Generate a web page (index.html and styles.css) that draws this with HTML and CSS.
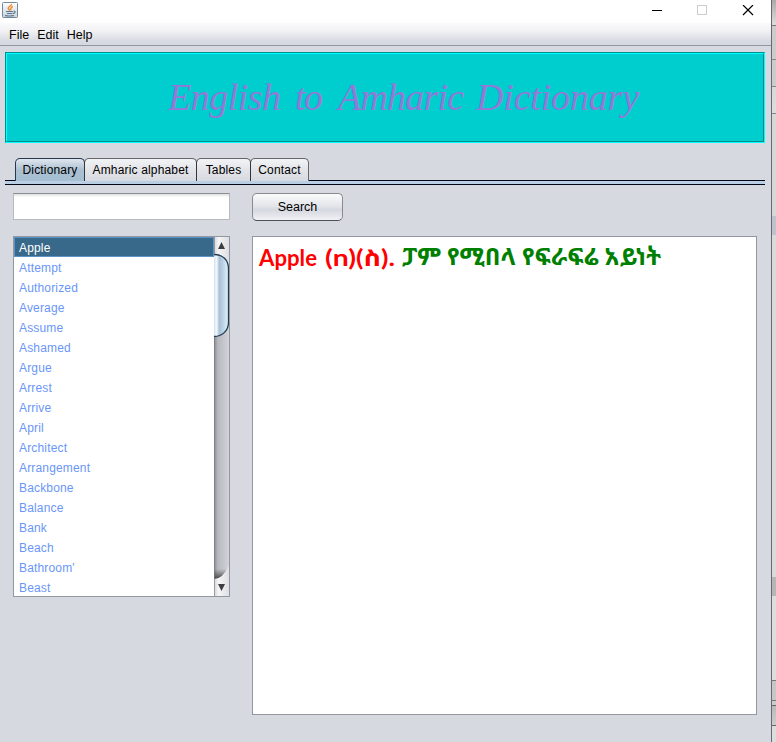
FILE: index.html
```html
<!DOCTYPE html>
<html lang="en">
<head>
<meta charset="utf-8">
<title>English to Amharic Dictionary</title>
<link rel="stylesheet" href="styles.css">
</head>
<body>
<div class="screen">
  <main class="window">
    <header class="titlebar">
      <svg class="java" width="16" height="16" viewBox="0 0 16 16">
        <defs><linearGradient id="ib" x2="0" y2="1"><stop stop-color="#fff"/><stop offset="1" stop-color="#c9d3da"/></linearGradient></defs>
        <rect x=".5" y=".5" width="15" height="15" rx="1" fill="url(#ib)" stroke="#71899c"/>
        <path d="M9.500 2C10 4 5.500 4.500 6.200 6.500Q7 7.500 8 8.500M10.800 4.500C8 5.500 9.500 6.500 8.500 8" fill="none" stroke="#ee8427" stroke-width="1.400"/>
        <path d="M4 9.500H11M5 11.500H10.500M3 13.500Q7 14.500 12 13.500M11.500 9Q14 9 12.500 11L11 11.500" fill="none" stroke="#59768e" stroke-width="1.200"/>
      </svg>
      <svg class="controls" width="102" height="12" viewBox="0 0 102 12" shape-rendering="crispEdges">
        <path d="M0 5.500H10" stroke="#000"/>
        <rect x="45.500" y=".5" width="9" height="9" fill="none" stroke="#ccc"/>
        <path d="M91 0L101 10M101 0L91 10" stroke="#000" stroke-width="1.200" shape-rendering="auto"/>
      </svg>
    </header>
    <nav class="menubar"><span>File</span><span>Edit</span><span>Help</span></nav>
    <section class="banner"><div class="banner-in">
      <svg width="500" height="86" viewBox="0 0 500 86">
        <g class="title">
          <text x="9" y="56" textLength="113">English</text>
          <text x="136" y="56" textLength="28">to</text>
          <text x="179" y="56" textLength="126">Amharic</text>
          <text x="317" y="56" textLength="163">Dictionary</text>
        </g>
      </svg>
    </div></section>
    <nav class="tabs">
      <span class="tab t1 active">Dictionary</span><span class="tab t2">Amharic alphabet</span><span class="tab t3">Tables</span><span class="tab t4">Contact</span>
    </nav>
    <div class="rail"></div>
    <section class="content">
      <div class="side">
        <input class="query" type="text" aria-label="Word">
        <div class="list">
          <ul>
            <li class="selected">Apple</li><li>Attempt</li><li>Authorized</li><li>Average</li><li>Assume</li><li>Ashamed</li><li>Argue</li><li>Arrest</li><li>Arrive</li><li>April</li><li>Architect</li><li>Arrangement</li><li>Backbone</li><li>Balance</li><li>Bank</li><li>Beach</li><li>Bathroom'</li><li class="last">Beast</li>
          </ul>
          <svg class="scroll" width="15" height="359" viewBox="0 0 15 359">
            <defs>
              <linearGradient id="track"><stop stop-color="#85878d"/><stop offset=".25" stop-color="#b6b8be"/><stop offset="1" stop-color="#d2d4d9"/></linearGradient>
              <linearGradient id="thumb"><stop stop-color="#cfdfed"/><stop offset=".16" stop-color="#f5faff"/><stop offset=".38" stop-color="#a9c1d7"/><stop offset=".65" stop-color="#bfd6e7"/><stop offset="1" stop-color="#dff5fd"/></linearGradient>
              <linearGradient id="end"><stop stop-color="#d3d4d7"/><stop offset=".3" stop-color="#f5f5f6"/><stop offset="1" stop-color="#dedfe3"/></linearGradient>
              <linearGradient id="shade" x2="0" y2="1"><stop stop-color="#555" stop-opacity="0"/><stop offset="1" stop-color="#444"/></linearGradient>
            </defs>
            <rect width="15" height="359" fill="url(#track)"/>
            <path d="M0 0H15V34Q14 17 0 17Z" fill="url(#end)"/>
            <rect y="332" width="15" height="10" fill="url(#shade)"/>
            <path d="M0 342Q9 342 15 328V359H0Z" fill="url(#end)"/>
            <path d="M0 17.500C8 17.500 14.500 22 14.500 32V85C14.500 94 8 99.500 0 99.500Z" fill="url(#thumb)"/>
            <path d="M0 17.500C8 17.500 14.500 22 14.500 32V85C14.500 94 8 99.500 0 99.500" fill="none" stroke="#243d53" stroke-width="1.300"/>
            <path d="M7.500 5L11 12H4ZM4 347H11L7.500 354Z" fill="#3d3e42"/>
            <path d="M.5 0V17M.5 100V359" stroke="#77797f" stroke-opacity=".65"/>
          </svg>
        </div>
      </div>
      <div class="detail">
        <button class="search">Search</button>
        <article class="result">
          <svg width="420" height="40" viewBox="0 0 420 40">
            <g class="word">
              <text x="6" y="29" textLength="58" lengthAdjust="spacingAndGlyphs">Apple</text>
              <text x="72" y="29" textLength="31" lengthAdjust="spacingAndGlyphs">(n)</text>
              <text x="103" y="29" textLength="39" lengthAdjust="spacingAndGlyphs">(ስ).</text>
            </g>
            <text class="meaning" x="149" y="28" textLength="259" lengthAdjust="spacingAndGlyphs">ፓም የሚበላ የፍራፍሬ አይነት</text>
          </svg>
        </article>
      </div>
    </section>
  </main>
  <aside class="behind"></aside>
</div>
</body>
</html>
```
FILE: styles.css
```css
* { box-sizing: border-box; }
body { margin: 0; overflow: hidden; font: 12px/15px "Liberation Sans", Arial, sans-serif; color: #000; }
.screen { display: flex; width: 776px; height: 742px; }
.window { width: 772px; background: #d6d9e0; border-right: 1px solid #666970; }
.titlebar { height: 23px; background: #fff; display: flex; justify-content: space-between; padding: 2px 17px 0 2px; }
.controls { margin-top: 3px; }
.menubar { height: 23px; border-bottom: 1px solid #9297a1; background: linear-gradient(#fafafb, #f2f2f5 35%, #d6d9e0 85%); display: flex; gap: 8px; padding: 5px 9px 0; font-size: 12.500px; }
.banner { width: 760px; height: 91px; margin: 6px 0 0 5px; border: 1px solid; border-color: #008f8f #0ff #0ff #008f8f; }
.banner-in { height: 89px; border: 1px solid; border-color: #0ff #008f8f #008f8f #0ff; background: #00cdcd; padding: 0 0 0 152px; }
.banner svg { display: block; }
.title { font: italic 38px "Liberation Serif", serif; fill: #9478d8; }
.tabs { display: flex; height: 22px; margin: 15px 0 0 15px; letter-spacing: .16px; }
.tab { height: 23px; border: 1px solid #64666c; border-bottom: 0; border-left-color: #33363e; border-radius: 5px 5px 0 0; background: linear-gradient(#f2f3f5, #e2e4e8 50%, #d7dae1); text-align: center; padding-top: 4px; margin-right: -1px; white-space: nowrap; }
.t1 { width: 70px; }
.t2 { width: 113px; }
.t3 { width: 55px; }
.t4 { width: 59px; }
.active { background: linear-gradient(#e0e7ef, #abc0d2 50%, #a6bfd3); border-color: #26374a; }
.rail { width: 760px; height: 5px; margin-left: 5px; border: solid #000818; border-width: 1px 0; background: #bacfe3; }
.content { display: flex; gap: 22px; padding: 8px 0 0 13px; }
.side { width: 217px; }
.query { display: block; width: 217px; height: 27px; border: 1px solid #b8babf; border-top-color: #8d8f94; border-radius: 0; background: linear-gradient(#ddd, #fff 3px); outline: none; }
.list { height: 361px; margin-top: 16px; border: 1px solid #9297a1; background: #fff; display: flex; overflow: hidden; }
ul { list-style: none; width: 200px; margin: 0; padding: 0; }
li { height: 20px; padding: 4px 5px 0; color: #6a96f7; letter-spacing: .16px; }
.last { height: 19px; }
.selected { background: #39698a; color: #fff; border: 1px solid #5c93c4; padding: 3px 4px 0; line-height: 15px; }
.scroll { display: block; }
.search { display: block; width: 91px; height: 28px; padding: 0 0 1px; font: 12.500px "Liberation Sans", Arial, sans-serif; color: #000; border: 1px solid #898b91; border-bottom-color: #4f5157; border-radius: 5px; background: linear-gradient(#fafbfc, #e2e4e9 48%, #d5d8df 60%, #eff1f5); }
.result { width: 505px; height: 479px; margin-top: 15px; border: 1px solid #9297a1; background: #fff; }
.result svg { display: block; }
.word, .meaning { font: bold 24px Lato, "Noto Sans Ethiopic", "Noto Serif Ethiopic", sans-serif; fill: #f00; }
.word { font-size: 22px; }
.meaning { fill: #008000; }
.behind { width: 4px; background: linear-gradient(#aaa, #ddd 25px, #777 25px, #777 26px, #ccc 26px, #ccc 59px, #888 59px, #888 60px, #ccc 60px, #ccc 86px, #888 86px, #888 87px, #d8d8d8 87px, #ddd 113px, #778899 113px, #778899 114px, #d7d9d7 114px, #d7d9d7 216px, #bdc3cc 216px, #bdc3cc 235px, #d9dbd9 235px, #d9dbd9 577px, #b5b6b6 577px, #b5b6b6 596px, #dcdddc 596px, #dcdddc 680px, #777 680px, #777 681px, #c6c7c6 681px, #c6c7c6 700px, #777 700px, #777 701px, #ccc 701px, #ccc 705px, #666 705px, #666 706px, #b9bbba 706px, #ccc 725px, #666 725px, #666 726px, #ddd 726px); }
```
